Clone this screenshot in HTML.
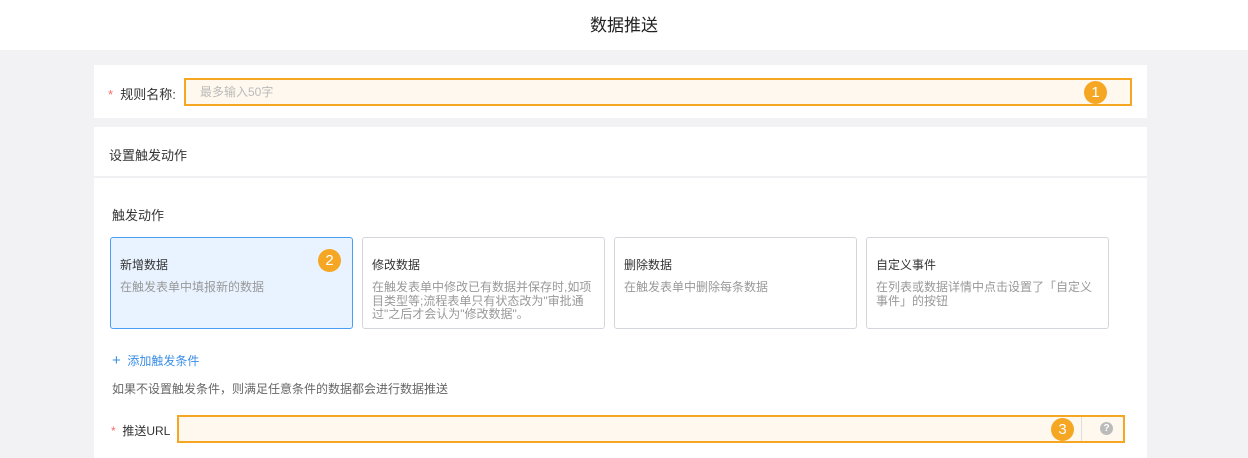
<!DOCTYPE html>
<html><head><meta charset="utf-8"><style>
*{box-sizing:border-box;margin:0;padding:0}
body{width:1248px;height:458px;overflow:hidden;background:#f2f2f4;font-family:"Liberation Sans","Noto Sans CJK SC",sans-serif;color:#333;position:relative}
.abs{position:absolute}
.hdr{left:0;top:0;width:1248px;height:50px;background:#fff;text-align:center;line-height:52px;font-size:17px;color:#222}
.p{background:#fff;left:94px;width:1053px}
.badge{width:23px;height:23px;border-radius:50%;background:#f5a623;color:#fff;font-size:15px;text-align:center;line-height:23px}
.card{top:237px;width:243px;height:92px;border:1px solid #d3d6dd;border-radius:3px;background:#fff;padding:19px 9px 0 9px}
.card .t{font-size:12px;color:#333;line-height:16px}
.card .d{font-size:12px;color:#999;line-height:13.5px;margin-top:8px}
</style></head><body>
<div class="abs hdr">数据推送</div>
<div class="abs p" style="top:65px;height:53px"></div>
<div class="abs" style="left:108px;top:84px;font-size:13px"><span style="color:#f56c6c">*</span>&nbsp; 规则名称:</div>
<div class="abs" style="left:184px;top:78px;width:948px;height:28px;border:2px solid #f5a623;background:#fff8ee;font-size:12px;color:#bbb;line-height:24px;padding-left:14px">最多输入50字</div>
<div class="abs badge" style="left:1084px;top:81px">1</div>
<div class="abs p" style="top:127px;height:331px"></div>
<div class="abs" style="left:94px;top:176px;width:1053px;height:2px;background:#f0f0f2"></div>
<div class="abs" style="left:109px;top:145px;font-size:13px">设置触发动作</div>
<div class="abs" style="left:112px;top:205px;font-size:13px">触发动作</div>
<div class="abs card" style="left:110px;background:#e8f3ff;border-color:#4a9ff5"><div class="t">新增数据</div><div class="d">在触发表单中填报新的数据</div></div>
<div class="abs badge" style="left:318px;top:249px">2</div>
<div class="abs card" style="left:362px"><div class="t">修改数据</div><div class="d">在触发表单中修改已有数据并保存时,如项目类型等;流程表单只有状态改为"审批通过"之后才会认为"修改数据"。</div></div>
<div class="abs card" style="left:614px"><div class="t">删除数据</div><div class="d">在触发表单中删除每条数据</div></div>
<div class="abs card" style="left:866px"><div class="t">自定义事件</div><div class="d">在列表或数据详情中点击设置了「自定义事件」的按钮</div></div>
<div class="abs" style="left:112px;top:352px;font-size:12px;color:#3a8ee6"><span style="font-size:15px">+</span>&nbsp; 添加触发条件</div>
<div class="abs" style="left:112px;top:380px;font-size:12px;color:#666">如果不设置触发条件，则满足任意条件的数据都会进行数据推送</div>
<div class="abs" style="left:111px;top:422px;font-size:12px"><span style="color:#f56c6c">*</span>&nbsp; 推送URL</div>
<div class="abs" style="left:177px;top:415px;width:948px;height:28px;border:2px solid #f5a623;background:#fff8ee"></div>
<div class="abs" style="left:1081px;top:417px;width:1px;height:24px;background:#ddd"></div>
<div class="abs badge" style="left:1051px;top:418px">3</div>
<div class="abs" style="left:1100px;top:422px;width:13px;height:13px;border-radius:50%;background:#bbb;color:#fff;font-size:10px;text-align:center;line-height:13px;font-weight:bold">?</div>
</body></html>
